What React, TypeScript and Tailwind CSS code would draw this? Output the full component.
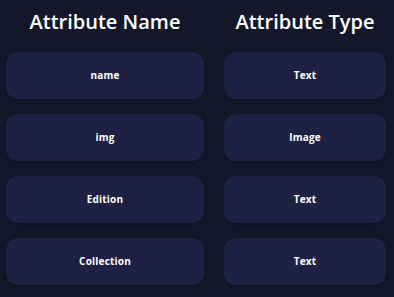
const rows = [
  { name: "name", type: "Text" },
  { name: "img", type: "Image" },
  { name: "Edition", type: "Text" },
  { name: "Collection", type: "Text" },
];

const Card = ({ label, width }: { label: string; width: string }) => (
  <div
    className={`${width} h-[47px] rounded-[12px] bg-[#1e2143] shadow-[0px_2px_6px_0px_rgba(0,0,0,0.25)] flex items-center justify-center`}
  >
    <span className="text-white text-[10px] font-bold tracking-[0.2px]">{label}</span>
  </div>
);

export default function App() {
  return (
    <div className="w-[394px] h-[297px] bg-[#141729] font-['Open_Sans',sans-serif] pl-[6px] pt-[7px]">
      <div className="grid grid-cols-[198px_162px] gap-x-[20px]">
        <h2 className="h-[30px] text-center text-white text-[20px] font-semibold leading-[30px]">
          Attribute Name
        </h2>
        <h2 className="h-[30px] text-center text-white text-[20px] font-semibold leading-[30px]">
          Attribute Type
        </h2>
      </div>
      <div className="mt-[15px] flex flex-col gap-[15px]">
        {rows.map((r) => (
          <div key={r.name} className="flex gap-[20px]">
            <Card label={r.name} width="w-[198px]" />
            <Card label={r.type} width="w-[162px]" />
          </div>
        ))}
      </div>
    </div>
  );
}
